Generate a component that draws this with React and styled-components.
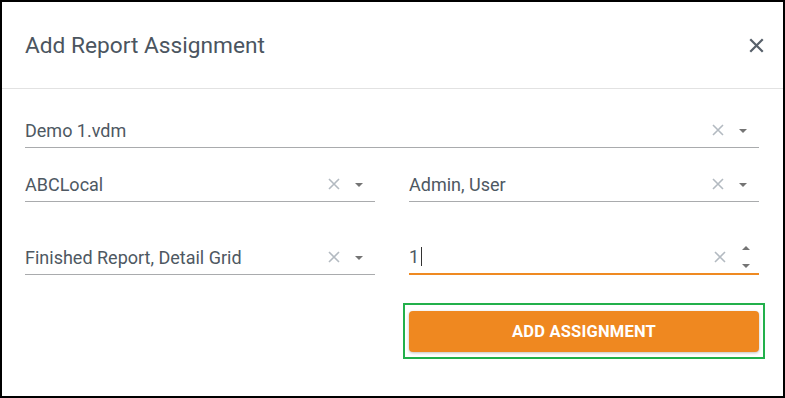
import React from 'react';
import styled, { createGlobalStyle } from 'styled-components';

const GlobalStyle = createGlobalStyle`
  html, body {
    margin: 0;
    padding: 0;
    background: #ffffff;
  }
  * {
    box-sizing: border-box;
  }
`;

const Dialog = styled.div`
  width: 785px;
  height: 398px;
  border: 2px solid #000000;
  background: #ffffff;
  font-family: Roboto, "Liberation Sans", Arial, sans-serif;
  display: flex;
  flex-direction: column;
`;

const Header = styled.div`
  height: 87px;
  padding: 0 19px 0 23px;
  display: flex;
  align-items: center;
  justify-content: space-between;
  border-bottom: 1px solid #e2e2e2;
`;

const Title = styled.h2`
  margin: 0;
  font-size: 22.7px;
  font-weight: 400;
  color: #4b5560;
`;

const CloseButton = styled.button`
  border: 0;
  padding: 0;
  background: none;
  width: 16px;
  height: 16px;
  display: flex;
  align-items: center;
  justify-content: center;
  color: #58616b;
  cursor: pointer;
`;

const Body = styled.div`
  padding: 24px 24px 0 23px;
  display: grid;
  grid-template-columns: 350px 350px;
  column-gap: 34px;
  align-content: start;
`;

const Field = styled.div`
  grid-column: ${(p) => (p.$wide ? '1 / span 2' : 'auto')};
  margin-top: ${(p) => p.$top || 0}px;
  height: 35px;
  display: flex;
  align-items: center;
  border-bottom: ${(p) => (p.$focused ? '2px solid #ef8a22' : '1px solid #a9abad')};
  padding-right: ${(p) => (p.$focused ? 9 : 12)}px;
`;

const Value = styled.div`
  flex: 1;
  font-size: 18px;
  color: #4e5862;
  white-space: nowrap;
  display: flex;
  align-items: center;
`;

const Caret = styled.span`
  display: inline-block;
  width: 1px;
  height: 19px;
  background: #333333;
  margin-left: 2px;
`;

const ClearIcon = styled.span`
  width: 12px;
  height: 12px;
  margin-right: 15px;
  display: flex;
  color: #b3bac1;
`;

const Arrow = styled.span`
  width: 0;
  height: 0;
  border-left: 4px solid transparent;
  border-right: 4px solid transparent;
  border-top: 4px solid #747474;
  margin-top: 2px;
`;

const Spinner = styled.span`
  display: flex;
  flex-direction: column;
  gap: 14px;
  width: 9px;
  align-items: center;
  margin-top: 0px;
`;

const SpinUp = styled.span`
  width: 0;
  height: 0;
  border-left: 4px solid transparent;
  border-right: 4px solid transparent;
  border-bottom: 4px solid #747474;
`;

const SpinDown = styled(SpinUp)`
  border-bottom: 0;
  border-top: 4px solid #747474;
`;

const Highlight = styled.div`
  grid-column: 2;
  margin: 28px -6px 0 -6px;
  border: 2px solid #22b04b;
  padding: 6px 4px 5px 4px;
`;

const PrimaryButton = styled.button`
  width: 100%;
  height: 41px;
  border: 0;
  border-radius: 4px;
  background: #ef8820;
  color: #ffffff;
  font-family: Roboto, "Liberation Sans", Arial, sans-serif;
  font-size: 16.5px;
  font-weight: 700;
  letter-spacing: 0.2px;
  box-shadow: 0 1px 3px rgba(0, 0, 0, 0.25);
  cursor: pointer;
`;

function XIcon({ size = 12, stroke = 1.6 }) {
  return (
    <svg width={size} height={size} viewBox="0 0 12 12" fill="none">
      <path d="M1 1L11 11M11 1L1 11" stroke="currentColor" strokeWidth={stroke} />
    </svg>
  );
}

function SelectField({ value, wide, top }) {
  return (
    <Field $wide={wide} $top={top}>
      <Value>{value}</Value>
      <ClearIcon><XIcon /></ClearIcon>
      <Arrow />
    </Field>
  );
}

export default function App() {
  return (
    <>
      <GlobalStyle />
      <Dialog>
        <Header>
          <Title>Add Report Assignment</Title>
          <CloseButton aria-label="Close"><XIcon size={15} stroke={1.8} /></CloseButton>
        </Header>
        <Body>
          <SelectField wide value="Demo 1.vdm" />
          <SelectField top={19} value="ABCLocal" />
          <SelectField top={19} value="Admin, User" />
          <SelectField top={38} value="Finished Report, Detail Grid" />
          <Field $top={38} $focused>
            <Value>1<Caret /></Value>
            <ClearIcon><XIcon /></ClearIcon>
            <Spinner>
              <SpinUp />
              <SpinDown />
            </Spinner>
          </Field>
          <Highlight>
            <PrimaryButton>ADD ASSIGNMENT</PrimaryButton>
          </Highlight>
        </Body>
      </Dialog>
    </>
  );
}
